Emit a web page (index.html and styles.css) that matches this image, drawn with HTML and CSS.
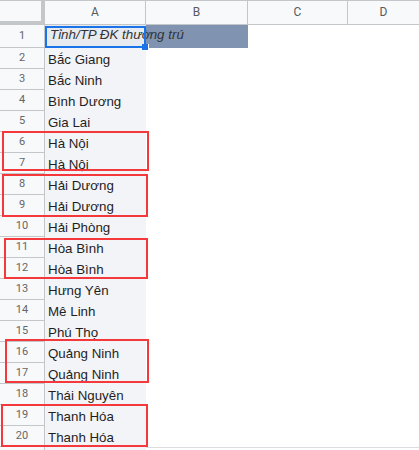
FILE: index.html
```html
<!DOCTYPE html>
<html lang="vi">
<head>
    <meta charset="UTF-8">
    <title>Tỉnh/TP ĐK thường trú</title>
    <link rel="stylesheet" href="styles.css">
</head>
<body>
    <div class="sheet">
        <!-- column headers -->
        <div class="row head">
            <div class="corner"></div>
            <div class="col-head">A</div>
            <div class="col-head">B</div>
            <div class="col-head">C</div>
            <div class="col-head last">D</div>
        </div>

        <div class="row first">
            <div class="num">1</div>
            <div class="cell title">Tỉnh/TP ĐK thường trú</div>
            <div class="cell fill"></div>
            <div class="cell"></div>
            <div class="cell"></div>
        </div>
        <div class="row"><div class="num">2</div><div class="cell a">Bắc Giang</div><div class="cell"></div><div class="cell"></div><div class="cell"></div></div>
        <div class="row"><div class="num">3</div><div class="cell a">Bắc Ninh</div><div class="cell"></div><div class="cell"></div><div class="cell"></div></div>
        <div class="row"><div class="num">4</div><div class="cell a">Bình Dương</div><div class="cell"></div><div class="cell"></div><div class="cell"></div></div>
        <div class="row"><div class="num">5</div><div class="cell a">Gia Lai</div><div class="cell"></div><div class="cell"></div><div class="cell"></div></div>
        <div class="row"><div class="num">6</div><div class="cell a">Hà Nội</div><div class="cell"></div><div class="cell"></div><div class="cell"></div></div>
        <div class="row"><div class="num">7</div><div class="cell a">Hà Nội</div><div class="cell"></div><div class="cell"></div><div class="cell"></div></div>
        <div class="row"><div class="num">8</div><div class="cell a">Hải Dương</div><div class="cell"></div><div class="cell"></div><div class="cell"></div></div>
        <div class="row"><div class="num">9</div><div class="cell a">Hải Dương</div><div class="cell"></div><div class="cell"></div><div class="cell"></div></div>
        <div class="row"><div class="num">10</div><div class="cell a">Hải Phòng</div><div class="cell"></div><div class="cell"></div><div class="cell"></div></div>
        <div class="row"><div class="num">11</div><div class="cell a">Hòa Bình</div><div class="cell"></div><div class="cell"></div><div class="cell"></div></div>
        <div class="row"><div class="num">12</div><div class="cell a">Hòa Bình</div><div class="cell"></div><div class="cell"></div><div class="cell"></div></div>
        <div class="row"><div class="num">13</div><div class="cell a">Hưng Yên</div><div class="cell"></div><div class="cell"></div><div class="cell"></div></div>
        <div class="row"><div class="num">14</div><div class="cell a">Mê Linh</div><div class="cell"></div><div class="cell"></div><div class="cell"></div></div>
        <div class="row"><div class="num">15</div><div class="cell a">Phú Thọ</div><div class="cell"></div><div class="cell"></div><div class="cell"></div></div>
        <div class="row"><div class="num">16</div><div class="cell a">Quảng Ninh</div><div class="cell"></div><div class="cell"></div><div class="cell"></div></div>
        <div class="row"><div class="num">17</div><div class="cell a">Quảng Ninh</div><div class="cell"></div><div class="cell"></div><div class="cell"></div></div>
        <div class="row"><div class="num">18</div><div class="cell a">Thái Nguyên</div><div class="cell"></div><div class="cell"></div><div class="cell"></div></div>
        <div class="row"><div class="num">19</div><div class="cell a">Thanh Hóa</div><div class="cell"></div><div class="cell"></div><div class="cell"></div></div>
        <div class="row"><div class="num">20</div><div class="cell a">Thanh Hóa</div><div class="cell"></div><div class="cell"></div><div class="cell"></div></div>
        <div class="row tail">
            <div class="num"></div>
            <div class="cell a"></div>
            <div class="cell rule"></div>
            <div class="cell rule"></div>
            <div class="cell rule"></div>
        </div>

        <!-- selected cell A1 -->
        <div class="selection"><span class="handle"></span></div>

        <!-- red highlight boxes around duplicates -->
        <div class="mark m1"></div>
        <div class="mark m2"></div>
        <div class="mark m3"></div>
        <div class="mark m4"></div>
        <div class="mark m5"></div>
    </div>
</body>
</html>
```

FILE: styles.css
```css
body {
    margin: 0;
    background-color: #fff;
    overflow: hidden;
}

.sheet {
    position: relative;
    width: 419px;
    height: 450px;
    font-family: "Liberation Sans", Arial, sans-serif;
    font-size: 13.33px;
    color: #1f1f1f;
}

.row {
    display: grid;
    grid-template-columns: 45px 101px 102px 100px 1fr;
    height: 21px;
}

.row.head {
    height: 25px;
}

.row.first {
    height: 23px;
}

.corner {
    background-color: #f8f9fa;
    border-top: 1px solid #c4c7c9;
    border-right: 4px solid #c4c7c9;
    border-bottom: 4px solid #c4c7c9;
}

.col-head {
    background-color: #f8f9fa;
    border-top: 1px solid #c4c7c9;
    border-right: 1px solid #c4c7c9;
    border-bottom: 1px solid #c4c7c9;
    font-family: Roboto, "Liberation Sans", sans-serif;
    font-size: 12px;
    color: #575a5e;
    text-align: center;
    line-height: 23px;
}

.col-head.last {
    border-right: none;
}

.num {
    background-color: #f8f9fa;
    border-right: 1px solid #c4c7c9;
    border-bottom: 1px solid #c4c7c9;
    font-family: Roboto, "Liberation Sans", sans-serif;
    font-size: 11px;
    color: #666;
    text-align: center;
    line-height: 20px;
}

.first .num {
    line-height: 22px;
}

.cell {
    padding: 3px 0 0 3px;
    line-height: 18px;
    white-space: nowrap;
}

.cell.a {
    background-color: #f3f4f7;
}

/* header text spills over into B1 like a sheet cell does */
.cell.title {
    position: relative;
    z-index: 1;
    background-color: #e7eaef;
    padding: 1px 0 0 5px;
    font-style: italic;
    color: #333;
    overflow: visible;
}

.cell.fill {
    background-color: #8094b1;
}

.tail .num {
    border-bottom: none;
}

.cell.rule {
    border-top: 1px solid #dadce0;
}

.selection {
    position: absolute;
    z-index: 2;
    left: 45px;
    top: 26px;
    width: 101px;
    height: 22px;
    box-sizing: border-box;
    border: 2px solid #1a73e8;
}

.handle {
    position: absolute;
    right: -5px;
    bottom: -5px;
    width: 6px;
    height: 6px;
    background-color: #1a73e8;
    border: 1px solid #fff;
    border-top: none;
    border-left: none;
}

.mark {
    position: absolute;
    z-index: 2;
    box-sizing: border-box;
    border: 2.5px solid #f5383b;
}

.m1 { left: 2px; top: 131px; width: 147px; height: 40px; }
.m2 { left: 2px; top: 174px; width: 146px; height: 43px; }
.m3 { left: 4px; top: 238px; width: 144px; height: 41px; }
.m4 { left: 5px; top: 339px; width: 144px; height: 44px; }
.m5 { left: 1px; top: 404px; width: 147px; height: 43px; }
```
